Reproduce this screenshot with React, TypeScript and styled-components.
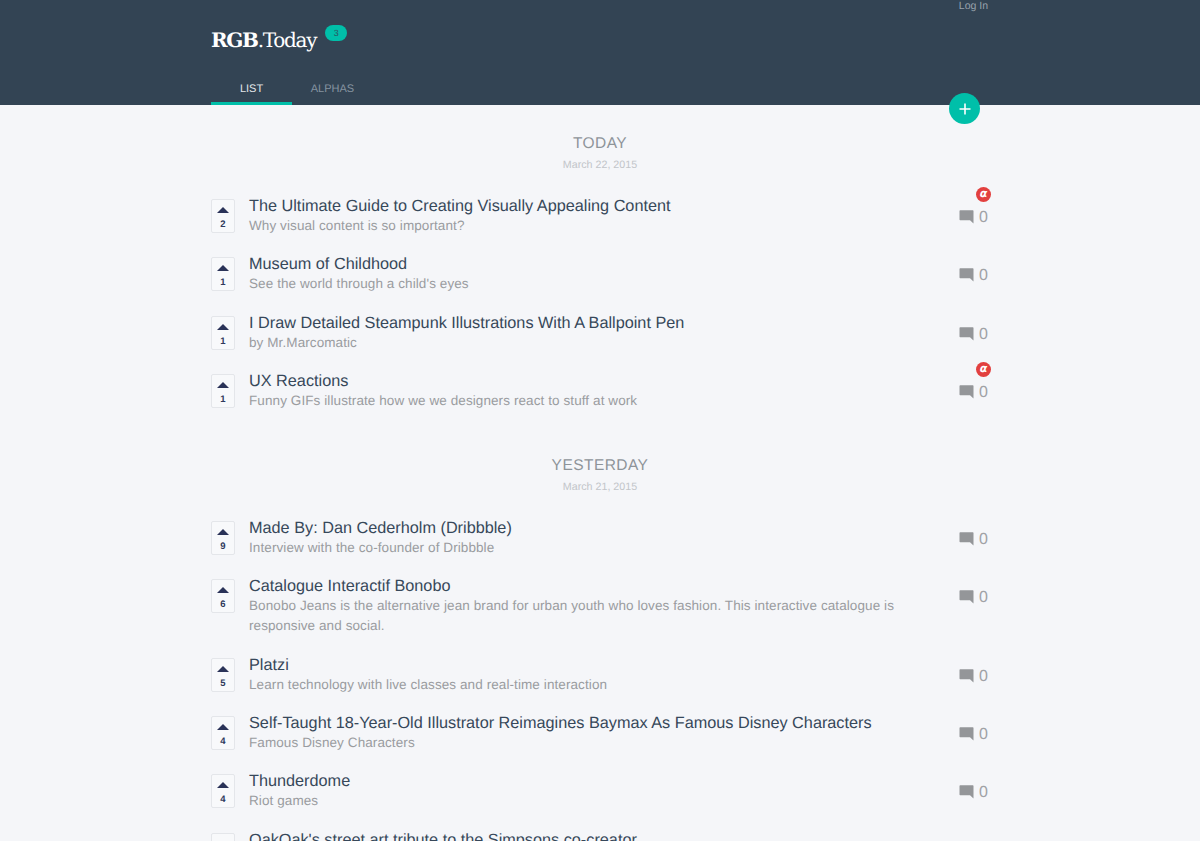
import React from "react";
import styled, { createGlobalStyle } from "styled-components";

const Global = createGlobalStyle`
  html, body { margin: 0; padding: 0; height: 841px; overflow: hidden; background: #f5f6f9; }
  body { font-family: "Liberation Sans", Arial, sans-serif; text-rendering: geometricPrecision; }
  * { box-sizing: border-box; }
`;

const Page = styled.div`
  height: 841px;
  overflow: hidden;
`;

const Header = styled.header`
  position: relative;
  height: 105px;
  background: #334454;
`;

const HeaderInner = styled.div`
  width: 778px;
  margin-left: 211px;
  height: 100%;
  display: flex;
  flex-direction: column;
  position: relative;
`;

const LoginRow = styled.div`
  display: flex;
  justify-content: flex-end;
  height: 27px;
  padding-right: 1px;
`;

const Login = styled.a`
  font-size: 10.5px;
  line-height: 12px;
  color: #98a2ac;
`;

const BrandRow = styled.div`
  display: flex;
  align-items: flex-start;
  height: 47px;
`;

const Logo = styled.div`
  font-family: "DejaVu Serif", serif;
  font-size: 20px;
  line-height: 26px;
  color: #fff;
  letter-spacing: -1.3px;
  b { font-weight: 700; }
`;

const Badge = styled.span`
  margin-left: 9px;
  margin-top: -2px;
  width: 22px;
  height: 16px;
  border-radius: 8px;
  background: #00bfa9;
  color: #2c5563;
  font-size: 9px;
  line-height: 17px;
  text-align: center;
`;

const Tabs = styled.nav`
  display: flex;
  height: 31px;
`;

const Tab = styled.a<{ $active?: boolean }>`
  width: 81px;
  text-align: center;
  font-size: 11px;
  line-height: 31px;
  color: ${(p) => (p.$active ? "#e3e6e9" : "#8593a0")};
  border-bottom: 3px solid ${(p) => (p.$active ? "#00bfa9" : "transparent")};
`;

const Fab = styled.button`
  position: absolute;
  left: 738px;
  top: 93px;
  width: 31px;
  height: 31px;
  border: 0;
  padding: 0;
  border-radius: 50%;
  background: #00bfa9;
  display: flex;
  align-items: center;
  justify-content: center;
  z-index: 2;
`;

const Main = styled.main`
  width: 778px;
  margin-left: 211px;
`;

const Section = styled.section`
  padding-top: 30px;
`;

const DayTitle = styled.h2`
  margin: 0;
  text-align: center;
  font-weight: 400;
  font-size: 15.5px;
  line-height: 18px;
  letter-spacing: 0.45px;
  color: #8e9499;
`;

const DayDate = styled.div`
  text-align: center;
  font-size: 10.7px;
  line-height: 14px;
  margin-top: 5px;
  margin-bottom: 22px;
  color: #c2c5c9;
`;

const Row = styled.article`
  position: relative;
  display: flex;
  align-items: flex-start;
  padding-bottom: 16.33px;
  &:last-child {
    padding-bottom: 16px;
  }
`;

const Vote = styled.div`
  flex: none;
  width: 24px;
  height: 34px;
  margin-top: 5px;
  margin-right: 14px;
  background: #f8f9fb;
  border: 1px solid #e4e6ea;
  border-radius: 2px;
  display: flex;
  flex-direction: column;
  align-items: center;
  color: #2f3a5c;
`;

const VoteArrow = styled.span`
  width: 0;
  height: 0;
  margin-top: 7px;
  border-left: 6px solid transparent;
  border-right: 6px solid transparent;
  border-bottom: 6px solid #2a3358;
`;

const VoteCount = styled.span`
  font-size: 9.5px;
  font-weight: 700;
  line-height: 10px;
  margin-top: 7px;
`;

const Body = styled.div`
  width: 660px;
`;

const Title = styled.h3`
  margin: 0 0 -2px;
  font-weight: 400;
  font-size: 16.25px;
  line-height: 24px;
  color: #37485a;
`;

const Sub = styled.p`
  margin: 0;
  font-size: 13.5px;
  line-height: 20px;
  letter-spacing: 0.09px;
  color: #9a9ca0;
`;

const Comments = styled.div`
  margin-left: auto;
  margin-top: 15px;
  display: flex;
  align-items: flex-start;
  gap: 5px;
  width: 30px;
  font-size: 16px;
  line-height: 18px;
  color: #a0a2a6;
`;

const CommentGlyph = styled.svg`
  flex: none;
  margin-top: 1px;
`;

const Alpha = styled.span`
  position: absolute;
  left: 765px;
  top: -7px;
  width: 15px;
  height: 15px;
  border-radius: 50%;
  background: #e2403f;
  color: #fff;
  font-family: "DejaVu Sans", sans-serif;
  font-style: italic;
  font-weight: 700;
  font-size: 11px;
  line-height: 13px;
  text-align: center;
`;

type Item = { n: number; t: string; s: string; a?: boolean };

const today: Item[] = [
  { n: 2, t: "The Ultimate Guide to Creating Visually Appealing Content", s: "Why visual content is so important?", a: true },
  { n: 1, t: "Museum of Childhood", s: "See the world through a child's eyes" },
  { n: 1, t: "I Draw Detailed Steampunk Illustrations With A Ballpoint Pen", s: "by Mr.Marcomatic" },
  { n: 1, t: "UX Reactions", s: "Funny GIFs illustrate how we we designers react to stuff at work", a: true },
];

const yesterday: Item[] = [
  { n: 9, t: "Made By: Dan Cederholm (Dribbble)", s: "Interview with the co-founder of Dribbble" },
  { n: 6, t: "Catalogue Interactif Bonobo", s: "Bonobo Jeans is the alternative jean brand for urban youth who loves fashion. This interactive catalogue is responsive and social." },
  { n: 5, t: "Platzi", s: "Learn technology with live classes and real-time interaction" },
  { n: 4, t: "Self-Taught 18-Year-Old Illustrator Reimagines Baymax As Famous Disney Characters", s: "Famous Disney Characters" },
  { n: 4, t: "Thunderdome", s: "Riot games" },
  { n: 3, t: "OakOak's street art tribute to the Simpsons co-creator", s: "Sam Simon" },
];

const CommentIcon = () => (
  <CommentGlyph width="15" height="14" viewBox="0 0 15 14" aria-hidden="true">
    <path d="M0.5 1 Q0.5 0.3 1.2 0.3 H13.8 Q14.5 0.3 14.5 1 V13.5 L11 10.3 H1.2 Q0.5 10.3 0.5 9.6 Z" fill="#949699" />
  </CommentGlyph>
);

const Entry = ({ item }: { item: Item }) => (
  <Row>
    <Vote>
      <VoteArrow />
      <VoteCount>{item.n}</VoteCount>
    </Vote>
    <Body>
      <Title>{item.t}</Title>
      <Sub>{item.s}</Sub>
    </Body>
    <Comments>
      <CommentIcon />
      <span>0</span>
    </Comments>
    {item.a && <Alpha>α</Alpha>}
  </Row>
);

export default function App() {
  return (
    <Page>
      <Global />
      <Header>
        <HeaderInner>
          <LoginRow>
            <Login>Log In</Login>
          </LoginRow>
          <BrandRow>
            <Logo>
              <b>RGB</b>.Today
            </Logo>
            <Badge>3</Badge>
          </BrandRow>
          <Tabs>
            <Tab $active>LIST</Tab>
            <Tab>ALPHAS</Tab>
          </Tabs>
          <Fab aria-label="Add">
            <svg width="12" height="12" viewBox="0 0 12 12" aria-hidden="true">
              <path d="M6 0.5V11.5M0.5 6H11.5" stroke="#fff" strokeWidth="1.6" fill="none" />
            </svg>
          </Fab>
        </HeaderInner>
      </Header>
      <Main>
        <Section>
          <DayTitle>TODAY</DayTitle>
          <DayDate>March 22, 2015</DayDate>
          {today.map((it) => (
            <Entry key={it.t} item={it} />
          ))}
        </Section>
        <Section>
          <DayTitle>YESTERDAY</DayTitle>
          <DayDate>March 21, 2015</DayDate>
          {yesterday.map((it) => (
            <Entry key={it.t} item={it} />
          ))}
        </Section>
      </Main>
    </Page>
  );
}
